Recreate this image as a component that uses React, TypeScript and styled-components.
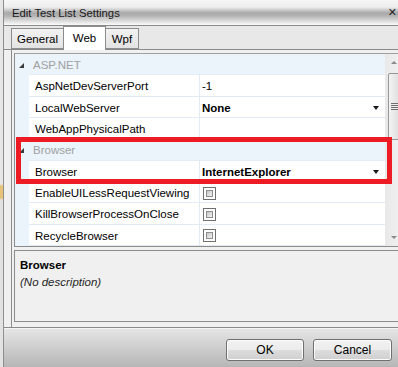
import React from "react"
import styled, { createGlobalStyle } from "styled-components"

const GlobalStyle = createGlobalStyle`
    html, body {
        margin: 0;
        padding: 0;
    }
    body {
        width: 398px;
        height: 367px;
        overflow: hidden;
        background: #f0f0f0;
        font-family: "Liberation Sans", Arial, sans-serif;
        font-size: 11.5px;
        color: #000;
    }
`

const Screen = styled.div`
    position: relative;
    display: flex;
    width: 398px;
    height: 367px;
    overflow: hidden;
`

const BehindWindow = styled.div`
    flex: none;
    width: 3px;
    border-right: 1px solid #8e8e8e;
    background: linear-gradient(
        to bottom,
        #e6e6e6 0px,
        #e6e6e6 184px,
        #e9c27a 186px,
        #e9c27a 198px,
        #e2e2e2 200px,
        #e2e2e2 100%
    );
`

const Dialog = styled.div`
    flex: none;
    width: 398px;
    display: flex;
    flex-direction: column;
    background: #f0f0f0;
`

const TitleBar = styled.div`
    flex: none;
    height: 25px;
    display: flex;
    align-items: center;
    padding-left: 8px;
    border-bottom: 1px solid #8a8a8a;
    background: linear-gradient(
        to bottom,
        #f6f6f6 0px,
        #eeeeee 7px,
        #a9a9a9 13px,
        #b4b4b4 16px,
        #dcdcdc 21px,
        #f4f4f4 24px,
        #fafafa 25px
    );
`

const Title = styled.span`
    font-size: 11.3px;
    color: #1a1a1a;
    padding-top: 1px;
`

const CloseGlyph = styled.span`
    margin-left: auto;
    margin-right: 5px;
    font-family: "DejaVu Sans", sans-serif;
    font-weight: bold;
    font-size: 11px;
    color: #222;
`

const TabStrip = styled.div`
    flex: none;
    height: 23px;
    display: flex;
    align-items: flex-end;
    padding-left: 7px;
    border-bottom: 1px solid #8a8a8a;
    background: #e8e8e8;
`

const Tab = styled.div<{ $active?: boolean; $width: number }>`
    box-sizing: border-box;
    width: ${(p) => p.$width}px;
    height: ${(p) => (p.$active ? 24 : 21)}px;
    margin-bottom: ${(p) => (p.$active ? -1 : 0)}px;
    margin-left: -1px;
    display: flex;
    align-items: center;
    justify-content: center;
    border: 1px solid #8c8c8c;
    border-bottom: ${(p) => (p.$active ? "none" : "1px solid #8c8c8c")};
    background: ${(p) =>
        p.$active ? "#ffffff" : "linear-gradient(to bottom, #f2f2f2, #e3e3e3)"};
    font-size: 11.5px;
    padding-bottom: ${(p) => (p.$active ? 2 : 0)}px;
    position: relative;
    z-index: ${(p) => (p.$active ? 1 : 0)};

    &:first-child {
        margin-left: 0;
    }
`

const TabPage = styled.div`
    flex: 1;
    display: flex;
    flex-direction: column;
    padding: 3px 0 4px 2px;
    border-left: 1px solid #8c8c8c;
    margin-left: 7px;
`

const Grid = styled.div`
    flex: none;
    display: flex;
    height: 192px;
    border-top: 1px solid #a0a0a0;
    border-bottom: 1px solid #8c8c8c;
    border-left: 1px solid #8c8c8c;
    background: #ffffff;
`

const Rows = styled.div`
    flex: 1;
    display: flex;
    flex-direction: column;
`

const Row = styled.div`
    flex: 1 1 0;
    display: grid;
    grid-template-columns: 14px 170px 1fr;
    min-height: 0;
`

const Gutter = styled.div`
    background: #ebf3fb;
    display: flex;
    align-items: center;
    justify-content: flex-end;
    padding: 2px 5px 0 0;
`

const CategoryCell = styled.div`
    grid-column: 2 / 4;
    display: flex;
    align-items: center;
    padding: 2px 0 0 4px;
    background: #ebf3fb;
    border-bottom: 1px solid #e3edf8;
    color: #a0a0a0;
`

const NameCell = styled.div`
    display: flex;
    align-items: center;
    padding: 2px 0 0 6px;
    border-bottom: 1px solid #e1ebf6;
    white-space: nowrap;
    overflow: hidden;
`

const ValueCell = styled.div<{ $bold?: boolean }>`
    display: flex;
    align-items: center;
    padding: 2px 6px 0 2px;
    border-left: 1px solid #e1ebf6;
    border-bottom: 1px solid #e1ebf6;
    font-weight: ${(p) => (p.$bold ? 700 : 400)};
    white-space: nowrap;
`

const DropArrow = styled.span`
    margin-left: auto;
    width: 0;
    height: 0;
    border-left: 3.5px solid transparent;
    border-right: 3.5px solid transparent;
    border-top: 4px solid #1a1a1a;
`

const CheckBox = styled.span`
    box-sizing: border-box;
    width: 13px;
    height: 13px;
    margin-left: 1px;
    padding: 2px;
    border: 1px solid #707070;
    background: #ffffff;

    &::after {
        content: "";
        display: block;
        box-sizing: border-box;
        width: 7px;
        height: 7px;
        border: 1px solid #8e8e8e;
        background: linear-gradient(135deg, #c4c4c4, #f4f4f4);
    }
`

const ScrollBar = styled.div`
    flex: none;
    width: 17px;
    display: flex;
    flex-direction: column;
    background: linear-gradient(to right, #e8e8e8, #f2f2f2);
`

const ScrollButton = styled.div<{ $down?: boolean }>`
    flex: none;
    height: 17px;
    display: flex;
    align-items: center;
    justify-content: center;

    &::after {
        content: "";
        width: 0;
        height: 0;
        border-left: 3px solid transparent;
        border-right: 3px solid transparent;
        ${(p) => (p.$down ? "border-top" : "border-bottom")}: 3px solid #8a8a8a;
    }
`

const Track = styled.div`
    flex: 1;
    padding: 2px 1px 0 3px;
`

const Thumb = styled.div`
    box-sizing: border-box;
    height: 67px;
    border: 1px solid #979797;
    border-radius: 2px;
    background: linear-gradient(to right, #f4f4f4, #dcdcdc);
    display: flex;
    align-items: center;
    justify-content: center;
`

const Grip = styled.div`
    width: 7px;
    height: 7px;
    background: repeating-linear-gradient(
        to bottom,
        #6e6e6e 0px,
        #6e6e6e 1px,
        #f0f0f0 1px,
        #f0f0f0 2px
    );
`

const Description = styled.div`
    flex: none;
    box-sizing: border-box;
    height: 72px;
    margin-top: 3px;
    padding: 6px 5px 0;
    border: 1px solid #8c8c8c;
    border-right: none;
    background: #f0f0f0;
    line-height: 17px;
`

const DescTitle = styled.div`
    font-weight: 700;
`

const DescText = styled.div`
    font-style: italic;
    color: #1e1e1e;
`

const ButtonBar = styled.div`
    flex: none;
    height: 40px;
    display: flex;
    justify-content: flex-end;
    align-items: flex-start;
    gap: 9px;
    padding: 11px 10px 0 0;
    box-sizing: border-box;
    border-top: 1px solid #8a8a8a;
    box-shadow: inset 0 1px 0 #f6f6f6;
    background: linear-gradient(to bottom, #e6e6e6, #b6b6b6);
`

const Button = styled.div<{ $width: number }>`
    box-sizing: border-box;
    width: ${(p) => p.$width}px;
    height: 22px;
    display: flex;
    align-items: center;
    justify-content: center;
    border: 1px solid #707070;
    border-radius: 3px;
    box-shadow: inset 0 0 0 1px #fbfbfb;
    background: linear-gradient(to bottom, #f2f2f2 0%, #ebebeb 50%, #dddddd 51%, #cfcfcf 100%);
    font-size: 12px;
`

const Highlight = styled.div`
    position: absolute;
    left: 16px;
    top: 137px;
    width: 376px;
    height: 47px;
    box-sizing: border-box;
    border: 5px solid #ed1c24;
    pointer-events: none;
`

type Prop =
    | { kind: "category"; name: string }
    | { kind: "text"; name: string; value: string; bold?: boolean; dropdown?: boolean }
    | { kind: "check"; name: string }

const properties: Prop[] = [
    { kind: "category", name: "ASP.NET" },
    { kind: "text", name: "AspNetDevServerPort", value: "-1" },
    { kind: "text", name: "LocalWebServer", value: "None", bold: true, dropdown: true },
    { kind: "text", name: "WebAppPhysicalPath", value: "" },
    { kind: "category", name: "Browser" },
    { kind: "text", name: "Browser", value: "InternetExplorer", bold: true, dropdown: true },
    { kind: "check", name: "EnableUILessRequestViewing" },
    { kind: "check", name: "KillBrowserProcessOnClose" },
    { kind: "check", name: "RecycleBrowser" },
]

const Expander = () => (
    <svg width="5" height="5" viewBox="0 0 5 5">
        <polygon points="5,0 5,5 0,5" fill="#3a3a3a" />
    </svg>
)

export default function App() {
    return (
        <Screen>
            <GlobalStyle />
            <BehindWindow />
            <Dialog>
                <TitleBar>
                    <Title>Edit Test List Settings</Title>
                    <CloseGlyph>✕</CloseGlyph>
                </TitleBar>
                <TabStrip>
                    <Tab $width={53}>General</Tab>
                    <Tab $active $width={43}>Web</Tab>
                    <Tab $width={34}>Wpf</Tab>
                </TabStrip>
                <TabPage>
                    <Grid>
                        <Rows>
                            {properties.map((p, i) => (
                                <Row key={i}>
                                    {p.kind === "category" ? (
                                        <>
                                            <Gutter>
                                                <Expander />
                                            </Gutter>
                                            <CategoryCell>{p.name}</CategoryCell>
                                        </>
                                    ) : (
                                        <>
                                            <Gutter />
                                            <NameCell>{p.name}</NameCell>
                                            {p.kind === "check" ? (
                                                <ValueCell>
                                                    <CheckBox />
                                                </ValueCell>
                                            ) : (
                                                <ValueCell $bold={p.bold}>
                                                    {p.value}
                                                    {p.dropdown && <DropArrow />}
                                                </ValueCell>
                                            )}
                                        </>
                                    )}
                                </Row>
                            ))}
                        </Rows>
                        <ScrollBar>
                            <ScrollButton />
                            <Track>
                                <Thumb>
                                    <Grip />
                                </Thumb>
                            </Track>
                            <ScrollButton $down />
                        </ScrollBar>
                    </Grid>
                    <Description>
                        <DescTitle>Browser</DescTitle>
                        <DescText>(No description)</DescText>
                    </Description>
                </TabPage>
                <ButtonBar>
                    <Button $width={78}>OK</Button>
                    <Button $width={79}>Cancel</Button>
                </ButtonBar>
            </Dialog>
            <Highlight />
        </Screen>
    )
}
